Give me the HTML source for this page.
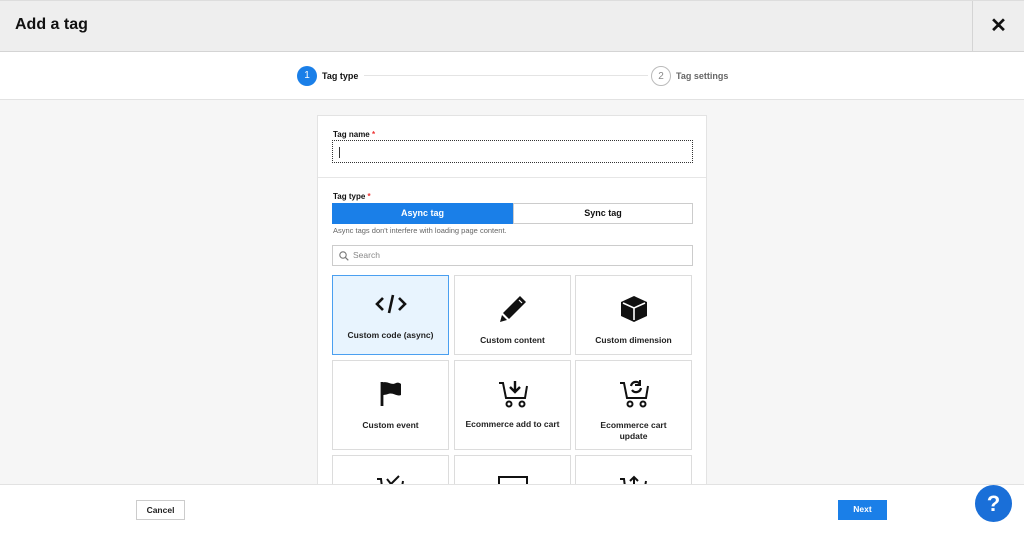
<!DOCTYPE html>
<html><head><style>
*{box-sizing:border-box;margin:0;padding:0}
body{width:1024px;height:534px;overflow:hidden;font-family:"Liberation Sans",sans-serif;background:#f6f6f6;position:relative;color:#111}
.hdr{position:absolute;left:0;top:0;width:1024px;height:52px;background:#eeeeee;border-top:1px solid #ddd;border-bottom:1px solid #d4d4d4}
.hdr h1{position:absolute;left:15px;top:15px;font-size:16px;font-weight:bold}
.close{position:absolute;left:972px;top:0;width:52px;height:51px;border-left:1px solid #d4d4d4;text-align:center;line-height:50px;font-size:20px;font-weight:bold}
.step{position:absolute;left:0;top:52px;width:1024px;height:48px;background:#fff;border-bottom:1px solid #e2e2e2}
.c{position:absolute;width:20px;height:20px;border-radius:50%;font-size:10px;text-align:center;line-height:19px}
.st{position:absolute;font-size:9px;font-weight:bold}
.card{position:absolute;left:317px;top:115px;width:390px;height:380px;background:#fff;border:1px solid #e3e3e3}
.lbl{position:absolute;font-size:8px;font-weight:bold}
.lbl span{color:#e33}
.tile{position:absolute;width:117px;background:#fff;border:1px solid #dcdcdc;text-align:center;font-size:8.5px;font-weight:bold;color:#222}
.tile svg{position:absolute;left:50%;transform:translateX(-50%)}
.tile p{position:absolute;left:0;right:0}
.foot{position:absolute;left:0;top:484px;width:1024px;height:50px;background:#fff;border-top:1px solid #e2e2e2}
.btn{position:absolute;top:15px;width:49px;height:20px;font-size:8.5px;font-weight:bold;text-align:center;line-height:19px}
</style></head><body>
<div class="hdr"><h1>Add a tag</h1><div class="close">✕</div></div>
<div class="step">
<div class="c" style="left:297px;top:14px;background:#1a7fe8;color:#fff">1</div>
<div class="st" style="left:322px;top:19px">Tag type</div>
<div style="position:absolute;left:364px;top:23px;width:284px;height:1px;background:#e4e4e4"></div>
<div class="c" style="left:651px;top:14px;border:1px solid #bbb;color:#888">2</div>
<div class="st" style="left:676px;top:19px;color:#666">Tag settings</div>
</div>
<div class="card">
<div class="lbl" style="left:15px;top:14px">Tag name <span>*</span></div>
<div style="position:absolute;left:14px;top:24px;width:361px;height:23px;border:1px dotted #333"><div style="position:absolute;left:6px;top:6px;width:1px;height:11px;background:#333"></div></div>
<div style="position:absolute;left:0;top:61px;width:388px;height:1px;background:#e6e6e6"></div>
<div class="lbl" style="left:15px;top:76px">Tag type <span>*</span></div>
<div style="position:absolute;left:14px;top:87px;width:181px;height:21px;background:#1a7fe8;color:#fff;font-size:9px;font-weight:bold;text-align:center;line-height:21px">Async tag</div>
<div style="position:absolute;left:195px;top:87px;width:180px;height:21px;border:1px solid #ccc;font-size:9px;font-weight:bold;text-align:center;line-height:19px">Sync tag</div>
<div style="position:absolute;left:15px;top:110px;font-size:7.5px;color:#666">Async tags don't interfere with loading page content.</div>
<div style="position:absolute;left:14px;top:129px;width:361px;height:21px;border:1px solid #ccc;font-size:8.5px;color:#888;line-height:19px;padding-left:20px">Search
<svg style="position:absolute;left:6px;top:5px" width="10" height="10" viewBox="0 0 10 10"><circle cx="4" cy="4" r="3.2" fill="none" stroke="#777" stroke-width="1.1"/><path d="M6.4 6.4L9.3 9.3" stroke="#777" stroke-width="1.2"/></svg></div>

<div class="tile" style="left:14px;top:159px;height:80px;background:#e8f4fe;border:1.5px solid #4a9ff0">
<svg style="top:17px" width="32" height="22" viewBox="0 0 32 22"><path d="M8 5L2 11L8 17M24 5L30 11L24 17M18 2L14 20" fill="none" stroke="#111" stroke-width="2.6"/></svg><p style="top:54px">Custom code (async)</p></div>
<div class="tile" style="left:136px;top:159px;height:80px">
<svg style="top:18px" width="30" height="30" viewBox="0 0 30 30"><path d="M22 2L28 8L11 25L5 19Z" fill="#111"/><path d="M4 21L9 26L2 28Z" fill="#111"/><path d="M21 6L24 9" stroke="#fff" stroke-width="1.2"/></svg><p style="top:59px">Custom content</p></div>
<div class="tile" style="left:257px;top:159px;height:80px">
<svg style="top:18px" width="30" height="30" viewBox="0 0 30 30"><path d="M15 2L28 8V22L15 28L2 22V8Z" fill="#111"/><path d="M4 9L15 14L26 9M15 14V26" fill="none" stroke="#fff" stroke-width="1.6"/><path d="M16.5 15.5L26 11V21L16.5 25.5Z" fill="#111"/></svg><p style="top:59px">Custom dimension</p></div>

<div class="tile" style="left:14px;top:244px;height:90px">
<svg style="top:19px" width="28" height="28" viewBox="0 0 28 28"><path d="M5 2V26" stroke="#111" stroke-width="2.8"/><path d="M5 3C10 0 14 6 19 3C21 2 23 3 24 4V15C20 17 16 12 11 14C8 15 6 15 5 15Z" fill="#111"/></svg><p style="top:59px">Custom event</p></div>
<div class="tile" style="left:136px;top:244px;height:90px">
<svg style="top:18px" width="32" height="30" viewBox="0 0 32 30"><path d="M2 4H6L9 19H28L30 7" fill="none" stroke="#111" stroke-width="2"/><circle cx="12" cy="25" r="2.5" fill="none" stroke="#111" stroke-width="2"/><circle cx="25" cy="25" r="2.5" fill="none" stroke="#111" stroke-width="2"/><path d="M18 2V12M13 8L18 13L23 8" fill="none" stroke="#111" stroke-width="2.4"/></svg><p style="top:58px">Ecommerce add to cart</p></div>
<div class="tile" style="left:257px;top:244px;height:90px">
<svg style="top:18px" width="32" height="30" viewBox="0 0 32 30"><path d="M2 4H6L9 19H28L30 7" fill="none" stroke="#111" stroke-width="2"/><circle cx="12" cy="25" r="2.5" fill="none" stroke="#111" stroke-width="2"/><circle cx="25" cy="25" r="2.5" fill="none" stroke="#111" stroke-width="2"/><path d="M13 7A5 5 0 0 1 22 5M23 9A5 5 0 0 1 14 11" fill="none" stroke="#111" stroke-width="2.2"/><path d="M22 1V6H17" fill="none" stroke="#111" stroke-width="2"/></svg><p style="top:59px;line-height:11px">Ecommerce cart<br>update</p></div>

<div class="tile" style="left:14px;top:339px;height:40px;overflow:hidden"><svg style="top:19px" width="32" height="12" viewBox="0 0 32 12"><path d="M2 4H6L7 12M12 4L16 9L24 1M28 6L27 12" fill="none" stroke="#111" stroke-width="2"/></svg></div>
<div class="tile" style="left:136px;top:339px;height:40px;overflow:hidden"><svg style="top:19px" width="32" height="12" viewBox="0 0 32 12"><path d="M2 12V2H30V12" fill="none" stroke="#111" stroke-width="2"/></svg></div>
<div class="tile" style="left:257px;top:339px;height:40px;overflow:hidden"><svg style="top:19px" width="32" height="12" viewBox="0 0 32 12"><path d="M2 4H6L7 12M16 12V2M12 6L16 2L20 6M28 6L27 12" fill="none" stroke="#111" stroke-width="2"/></svg></div>
</div>
<div class="foot">
<div class="btn" style="left:136px;border:1px solid #ccc;color:#222">Cancel</div>
<div class="btn" style="left:838px;background:#1a7fe8;color:#fff">Next</div>
<div style="position:absolute;left:975px;top:0px;width:37px;height:37px;border-radius:50%;background:#1a6fd8;color:#fff;font-size:22px;font-weight:bold;text-align:center;line-height:37px">?</div>
</div>
</body></html>
